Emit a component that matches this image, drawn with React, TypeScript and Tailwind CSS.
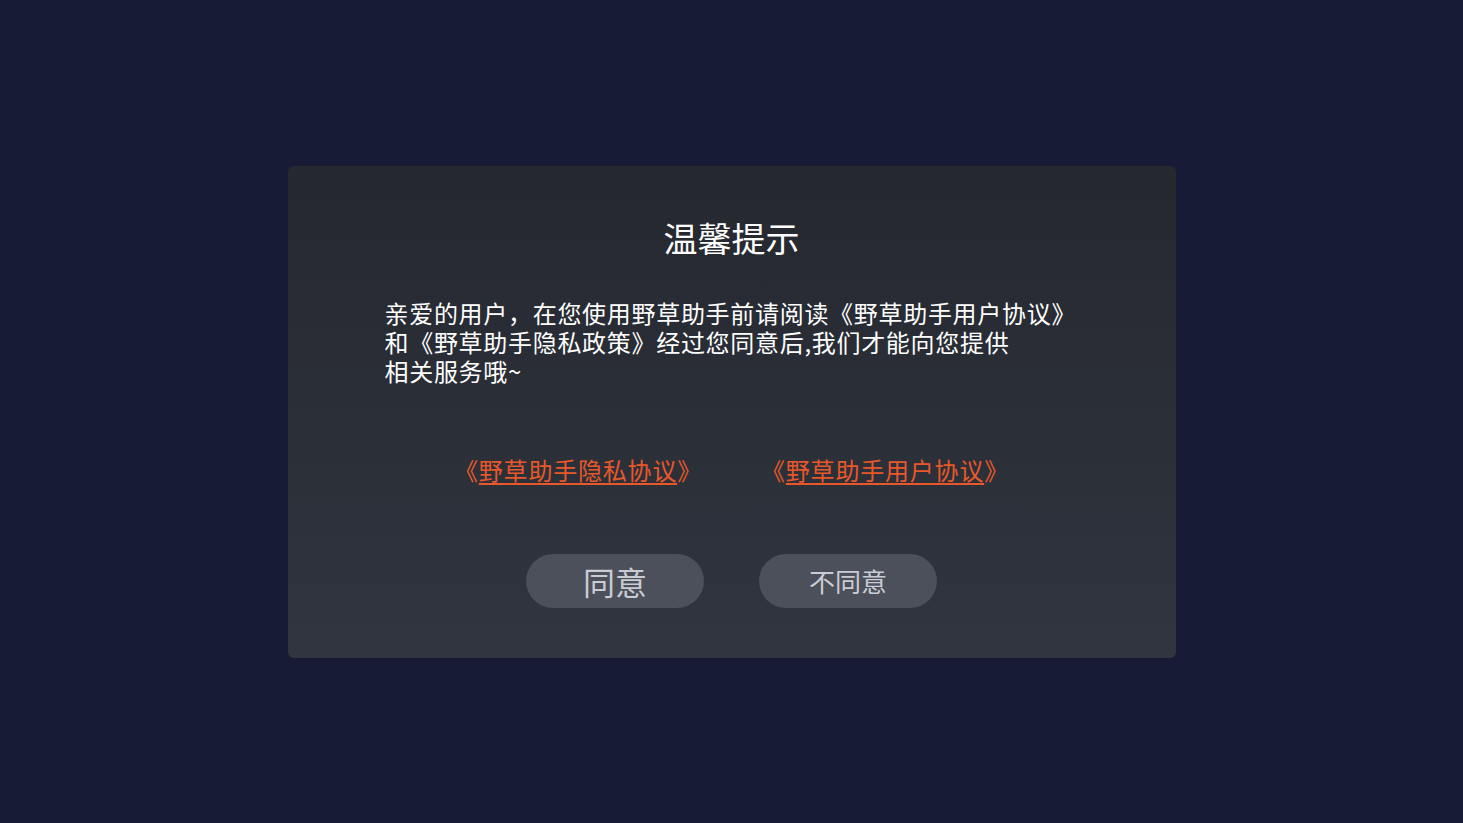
import React from "react";

export default function App() {
  const font = { fontFamily: '"Noto Sans CJK SC", "Noto Sans", sans-serif' };
  return (
    <div
      className="w-full h-screen bg-[#171b36] flex items-center justify-center"
      style={font}
    >
      <div className="w-[888px] h-[492px] rounded-[6px] bg-gradient-to-b from-[#25282f] to-[#30353f] flex flex-col">
        <div className="pt-[52px] text-center text-[34px] leading-[40px] text-white">
          温馨提示
        </div>
        <div className="mt-[40px] pl-[97px] text-[24px] leading-[29px] tracking-[0.7px] text-white">
          亲爱的用户，在您使用野草助手前请阅读《野草助手用户协议》
          <br />
          和《野草助手隐私政策》经过您同意后,我们才能向您提供
          <br />
          相关服务哦~
        </div>
        <div className="mt-[70px] flex justify-center gap-[59px] text-[24px] leading-[30px] tracking-[0.8px] text-[#e8582a]">
          <span>
            《<span className="underline underline-offset-[3px]">野草助手隐私协议</span>》
          </span>
          <span>
            《<span className="underline underline-offset-[3px]">野草助手用户协议</span>》
          </span>
        </div>
        <div className="mt-[69px] flex justify-center gap-[55px]">
          <button className="w-[178px] h-[54px] rounded-full bg-[#4b505b] text-[#c9ccd2] text-[32px] leading-none">
            同意
          </button>
          <button className="w-[178px] h-[54px] rounded-full bg-[#4b505b] text-[#c9ccd2] text-[26px] leading-none">
            不同意
          </button>
        </div>
      </div>
    </div>
  );
}
